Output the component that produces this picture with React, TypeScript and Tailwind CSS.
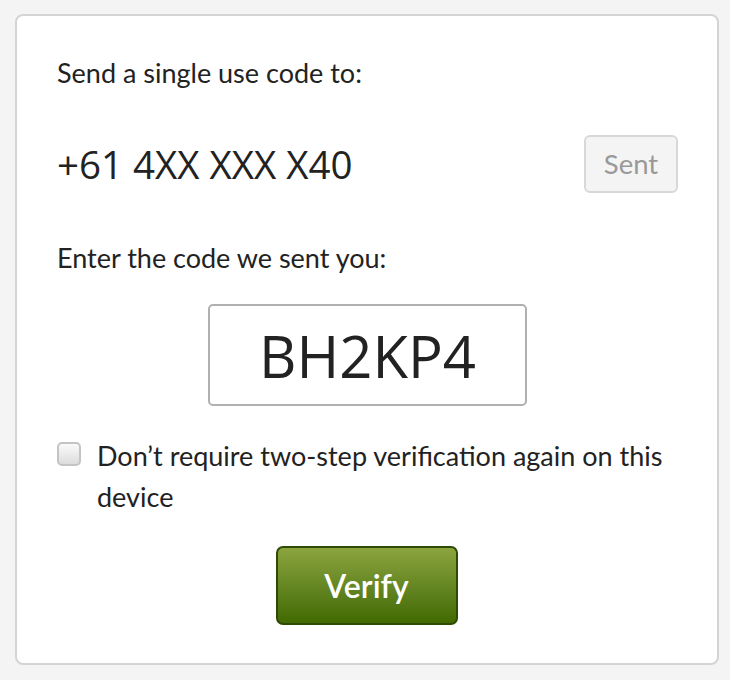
import React from "react";

export default function App() {
  return (
    <div className="w-[730px] h-[680px] bg-[#f4f4f4] pt-[14px] pl-[15px]" style={{ fontFamily: '"Source Sans Pro", Lato, "Noto Sans", sans-serif' }}>
      <div className="w-[704px] h-[651px] bg-white border-2 border-[#d4d4d4] rounded-[8px] px-[40px] pt-[37px] text-[#222]">
        <div className="text-[27px] leading-[40px]">Send a single use code to:</div>
        <div className="flex items-center justify-between mt-[41px] h-[60px]">
          <div className="text-[38.5px] pt-[2px]" style={{ fontFamily: '"Open Sans", sans-serif' }}>+61 4XX XXX X40</div>
          <button className="w-[94px] h-[58px] rounded-[6px] border-2 border-[#d8d8d8] bg-[#f4f4f4] text-[#999] text-[27.5px] -mr-[1px]">Sent</button>
        </div>
        <div className="text-[27px] leading-[40px] mt-[44px]">Enter the code we sent you:</div>
        <div className="flex justify-center mt-[26px]">
          <div className="w-[319px] h-[102px] border-2 border-[#b0b0b0] rounded-[5px] flex items-center justify-center text-[58px] ml-[1px]" style={{ fontFamily: '"Open Sans", sans-serif' }}>BH2KP4</div>
        </div>
        <div className="flex mt-[31px]">
          <div className="w-[24px] h-[24px] mt-[5px] rounded-[5px] border-2 border-[#c4c4c4] bg-gradient-to-b from-[#fafafa] to-[#dcdcdc] shrink-0" />
          <div className="ml-[16px] text-[27px] leading-[41px] mt-[-2px]">Don’t require two-step verification again on this device</div>
        </div>
        <div className="flex justify-center mt-[29px]">
          <button className="w-[182px] h-[79px] rounded-[7px] border-2 border-[#2f4a05] bg-gradient-to-b from-[#8ca53e] to-[#416a00] text-white text-[32px] font-semibold ml-[-1px]">Verify</button>
        </div>
      </div>
    </div>
  );
}
